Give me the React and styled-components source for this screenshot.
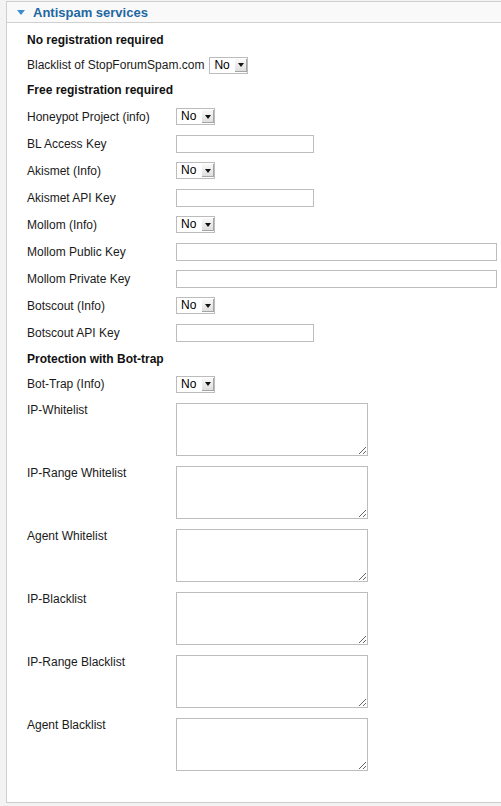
import styled, { createGlobalStyle } from "styled-components";

const GlobalStyle = createGlobalStyle`
  body {
    margin: 0;
    background: #f3f3f3;
    font-family: "Liberation Sans", Arial, sans-serif;
  }
`;

const Panel = styled.div`
  margin: 1px 0 0 6px;
  background: #fff;
  border-left: 1px solid #cfcfcf;
  border-top: 1px solid #d0d0d0;
  border-bottom: 1px solid #cdcdcd;
  padding-bottom: 31px;
`;

const Header = styled.div`
  height: 20px;
  background: #f9f9f9;
  border-bottom: 1px solid #d0d0d0;
  display: flex;
  align-items: center;
  gap: 8px;
  padding-left: 10px;
`;

const Arrow = styled.span`
  width: 0;
  height: 0;
  border-left: 4px solid transparent;
  border-right: 4px solid transparent;
  border-top: 5px solid #3b8cd0;
  margin-top: 1px;
`;

const Title = styled.h3`
  margin: 0;
  font-size: 13px;
  font-weight: bold;
  color: #1d67a3;
`;

const Body = styled.div`
  padding: 4px 0 0 20px;
  font-size: 12px;
  color: #1a1a1a;
`;

const Heading = styled.div`
  height: ${(p) => p.$h || 27}px;
  display: flex;
  align-items: center;
  font-weight: bold;
  color: #111;
`;

const InlineRow = styled.div`
  height: 24px;
  display: flex;
  align-items: center;
  gap: 5px;
`;

const Row = styled.div`
  height: ${(p) => p.$h || 27}px;
  display: grid;
  grid-template-columns: 149px auto;
  align-items: center;
  justify-items: start;
`;

const Label = styled.span`
  line-height: 14px;
`;

const SelectBox = styled.div`
  width: 37px;
  height: 15px;
  border: 1px solid #bcbcbc;
  display: flex;
  align-items: stretch;
  background: #fff;
  font-size: 12px;
  line-height: 15px;
`;

const SelectText = styled.span`
  flex: 1;
  padding-left: 4px;
  color: #000;
`;

const SelectButton = styled.span`
  width: 12px;
  margin: 1px 0;
  background: linear-gradient(#fafafa, #dcdcdc);
  box-shadow: inset -1px -1px 0 #a5a5a5;
  display: flex;
  align-items: center;
  justify-content: center;

  &::after {
    content: "";
    border-left: 3px solid transparent;
    border-right: 3px solid transparent;
    border-top: 4px solid #111;
  }
`;

const TextInput = styled.input`
  box-sizing: border-box;
  width: ${(p) => p.$w}px;
  height: 18px;
  border: 1px solid #bdbdbd;
  margin: 0;
  padding: 0 3px;
  font-size: 12px;
  background: #fff;
`;

const AreaList = styled.div`
  margin-top: 7px;
  display: flex;
  flex-direction: column;
  gap: 10px;
`;

const AreaRow = styled.div`
  display: grid;
  grid-template-columns: 149px auto;
  align-items: start;
`;

const AreaLabel = styled.span`
  line-height: 14px;
`;

const Area = styled.textarea`
  box-sizing: border-box;
  width: 192px;
  height: 53px;
  border: 1px solid #bdbdbd;
  margin: 0;
  padding: 2px;
  font-size: 12px;
  resize: both;
  display: block;
`;

function Select() {
  return (
    <SelectBox>
      <SelectText>No</SelectText>
      <SelectButton />
    </SelectBox>
  );
}

const fields = [
  { label: "Honeypot Project (info)", type: "select" },
  { label: "BL Access Key", type: "input", w: 138 },
  { label: "Akismet (Info)", type: "select" },
  { label: "Akismet API Key", type: "input", w: 138 },
  { label: "Mollom (Info)", type: "select" },
  { label: "Mollom Public Key", type: "input", w: 321 },
  { label: "Mollom Private Key", type: "input", w: 321 },
  { label: "Botscout (Info)", type: "select" },
  { label: "Botscout API Key", type: "input", w: 138 },
];

const lists = [
  "IP-Whitelist",
  "IP-Range Whitelist",
  "Agent Whitelist",
  "IP-Blacklist",
  "IP-Range Blacklist",
  "Agent Blacklist",
];

export default function App() {
  return (
    <>
      <GlobalStyle />
      <Panel>
        <Header>
          <Arrow />
          <Title>Antispam services</Title>
        </Header>
        <Body>
          <Heading $h={26}>No registration required</Heading>
          <InlineRow>
            <Label>Blacklist of StopForumSpam.com</Label>
            <Select />
          </InlineRow>
          <Heading $h={26}>Free registration required</Heading>
          {fields.map((f) => (
            <Row key={f.label}>
              <Label>{f.label}</Label>
              {f.type === "select" ? <Select /> : <TextInput $w={f.w} />}
            </Row>
          ))}
          <Heading $h={26}>Protection with Bot-trap</Heading>
          <Row $h={24}>
            <Label>Bot-Trap (Info)</Label>
            <Select />
          </Row>
          <AreaList>
            {lists.map((l) => (
              <AreaRow key={l}>
                <AreaLabel>{l}</AreaLabel>
                <Area />
              </AreaRow>
            ))}
          </AreaList>
        </Body>
      </Panel>
    </>
  );
}
